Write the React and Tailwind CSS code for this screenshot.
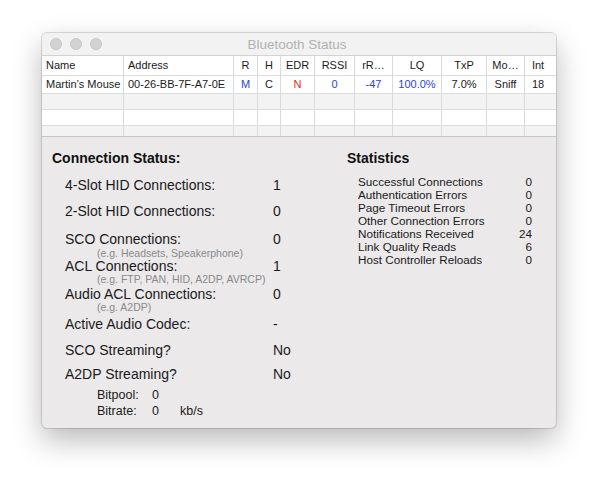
import React from "react";

const cols = [
  { w: 82, align: "left" },
  { w: 110, align: "left" },
  { w: 24 },
  { w: 23 },
  { w: 34 },
  { w: 40 },
  { w: 38 },
  { w: 49 },
  { w: 45 },
  { w: 38 },
  { w: 31 },
];

const header = ["Name", "Address", "R", "H", "EDR", "RSSI", "rR…", "LQ", "TxP", "Mo…", "Int"];
const BLUE = "text-[#2a45d6]";
const data = [
  ["Martin’s Mouse", ""],
  ["00-26-BB-7F-A7-0E", ""],
  ["M", BLUE],
  ["C", ""],
  ["N", "text-[#e5262c]"],
  ["0", BLUE],
  ["-47", BLUE],
  ["100.0%", BLUE],
  ["7.0%", ""],
  ["Sniff", ""],
  ["18", ""],
];

function Row({ h, bg, cells, last }) {
  return (
    <div className={`flex ${bg} ${last ? "border-b border-[#c6c6c6]" : "border-b border-[#dcdcdc]"}`} style={{ height: h }}>
      {cols.map((c, i) => (
        <div
          key={i}
          style={{ width: c.w }}
          className={`flex items-center shrink-0 overflow-hidden whitespace-nowrap ${
            i < cols.length - 1 ? "border-r border-[#d9d9d9]" : "pr-[5px]"
          } ${c.align === "left" ? "justify-start pl-[4px]" : "justify-center"} ${
            cells ? cells[i][1] : ""
          }`}
        >
          {cells ? cells[i][0] : ""}
        </div>
      ))}
    </div>
  );
}

function Main({ label, value, mt }) {
  return (
    <div className={`flex h-[15px] leading-[15px] items-center ml-[13px] text-[14px] text-[#1a1a1a] ${mt}`}>
      <div className="w-[208px]">{label}</div>
      <div>{value}</div>
    </div>
  );
}

function Sub({ text, mt }) {
  return (
    <div className={`h-[11px] leading-[11px] flex items-center ml-[45px] text-[10.5px] text-[#8a8a8a] ${mt}`}>{text}</div>
  );
}

const stats = [
  ["Successful Connections", "0"],
  ["Authentication Errors", "0"],
  ["Page Timeout Errors", "0"],
  ["Other Connection Errors", "0"],
  ["Notifications Received", "24"],
  ["Link Quality Reads", "6"],
  ["Host Controller Reloads", "0"],
];

export default function App() {
  return (
    <div
      className="w-[598px] h-[478px] bg-white pt-[33px] pl-[42px]"
      style={{ fontFamily: '"Liberation Sans", Arial, sans-serif' }}
    >
      <div className="w-[514px] h-[395px] rounded-[5px] bg-[#ebe9ea] overflow-hidden shadow-[0_0_0_1px_rgba(0,0,0,0.13),0_12px_30px_rgba(0,0,0,0.28)]">
        {/* Title bar */}
        <div className="h-[23px] grid grid-cols-[1fr_auto_1fr] items-center bg-[#f3f2f3] border-b border-[#d3d3d3]">
          <div className="flex gap-[8px] pl-[8px]">
            <div className="w-[12px] h-[12px] rounded-full bg-[#d3d2d3] border border-[#c7c6c7]" />
            <div className="w-[12px] h-[12px] rounded-full bg-[#d3d2d3] border border-[#c7c6c7]" />
            <div className="w-[12px] h-[12px] rounded-full bg-[#d3d2d3] border border-[#c7c6c7]" />
          </div>
          <div className="text-[13.5px] text-[#b2b1b2] -ml-[4px] mt-[2px]">Bluetooth Status</div>
          <div />
        </div>

        {/* Table */}
        <div className="text-[11px] text-[#1a1a1a]">
          <Row h={20} bg="bg-white" cells={header.map((t) => [t, ""])} />
          <Row h={18} bg="bg-white" cells={data} />
          <Row h={16} bg="bg-[#f3f3f3]" />
          <Row h={16} bg="bg-white" />
          <Row h={11} bg="bg-[#f3f3f3]" last />
        </div>

        {/* Body */}
        <div className="flex pt-[13px]">
          <div className="w-[305px] pl-[10px] flex flex-col">
            <div className="h-[16px] flex items-center text-[14px] font-bold text-[#111]">Connection Status:</div>
            <Main label="4-Slot HID Connections:" value="1" mt="mt-[12px]" />
            <Main label="2-Slot HID Connections:" value="0" mt="mt-[11px]" />
            <Main label="SCO Connections:" value="0" mt="mt-[13px]" />
            <Sub text="(e.g. Headsets, Speakerphone)" mt="mt-[1px]" />
            <Main label="ACL Connections:" value="1" mt="mt-[0px]" />
            <Sub text="(e.g. FTP, PAN, HID, A2DP, AVRCP)" mt="mt-[0px]" />
            <Main label="Audio ACL Connections:" value="0" mt="mt-[2px]" />
            <Sub text="(e.g. A2DP)" mt="mt-[0px]" />
            <Main label="Active Audio Codec:" value="-" mt="mt-[4px]" />
            <Main label="SCO Streaming?" value="No" mt="mt-[11px]" />
            <Main label="A2DP Streaming?" value="No" mt="mt-[9px]" />
            <div className="flex h-[15px] items-center ml-[45px] mt-[6px] text-[12.5px] text-[#1a1a1a]">
              <div className="w-[55px]">Bitpool:</div>
              <div>0</div>
            </div>
            <div className="flex h-[15px] items-center ml-[45px] mt-[1px] text-[12.5px] text-[#1a1a1a]">
              <div className="w-[55px]">Bitrate:</div>
              <div className="w-[28px]">0</div>
              <div>kb/s</div>
            </div>
          </div>
          <div className="flex flex-col">
            <div className="h-[16px] flex items-center text-[14px] font-bold text-[#111]">Statistics</div>
            <div className="mt-[9px] ml-[11px] w-[174px] text-[11.7px] text-[#1a1a1a]">
              {stats.map(([l, v]) => (
                <div key={l} className="flex justify-between h-[13px] items-center">
                  <span>{l}</span>
                  <span>{v}</span>
                </div>
              ))}
            </div>
          </div>
        </div>
      </div>
    </div>
  );
}
